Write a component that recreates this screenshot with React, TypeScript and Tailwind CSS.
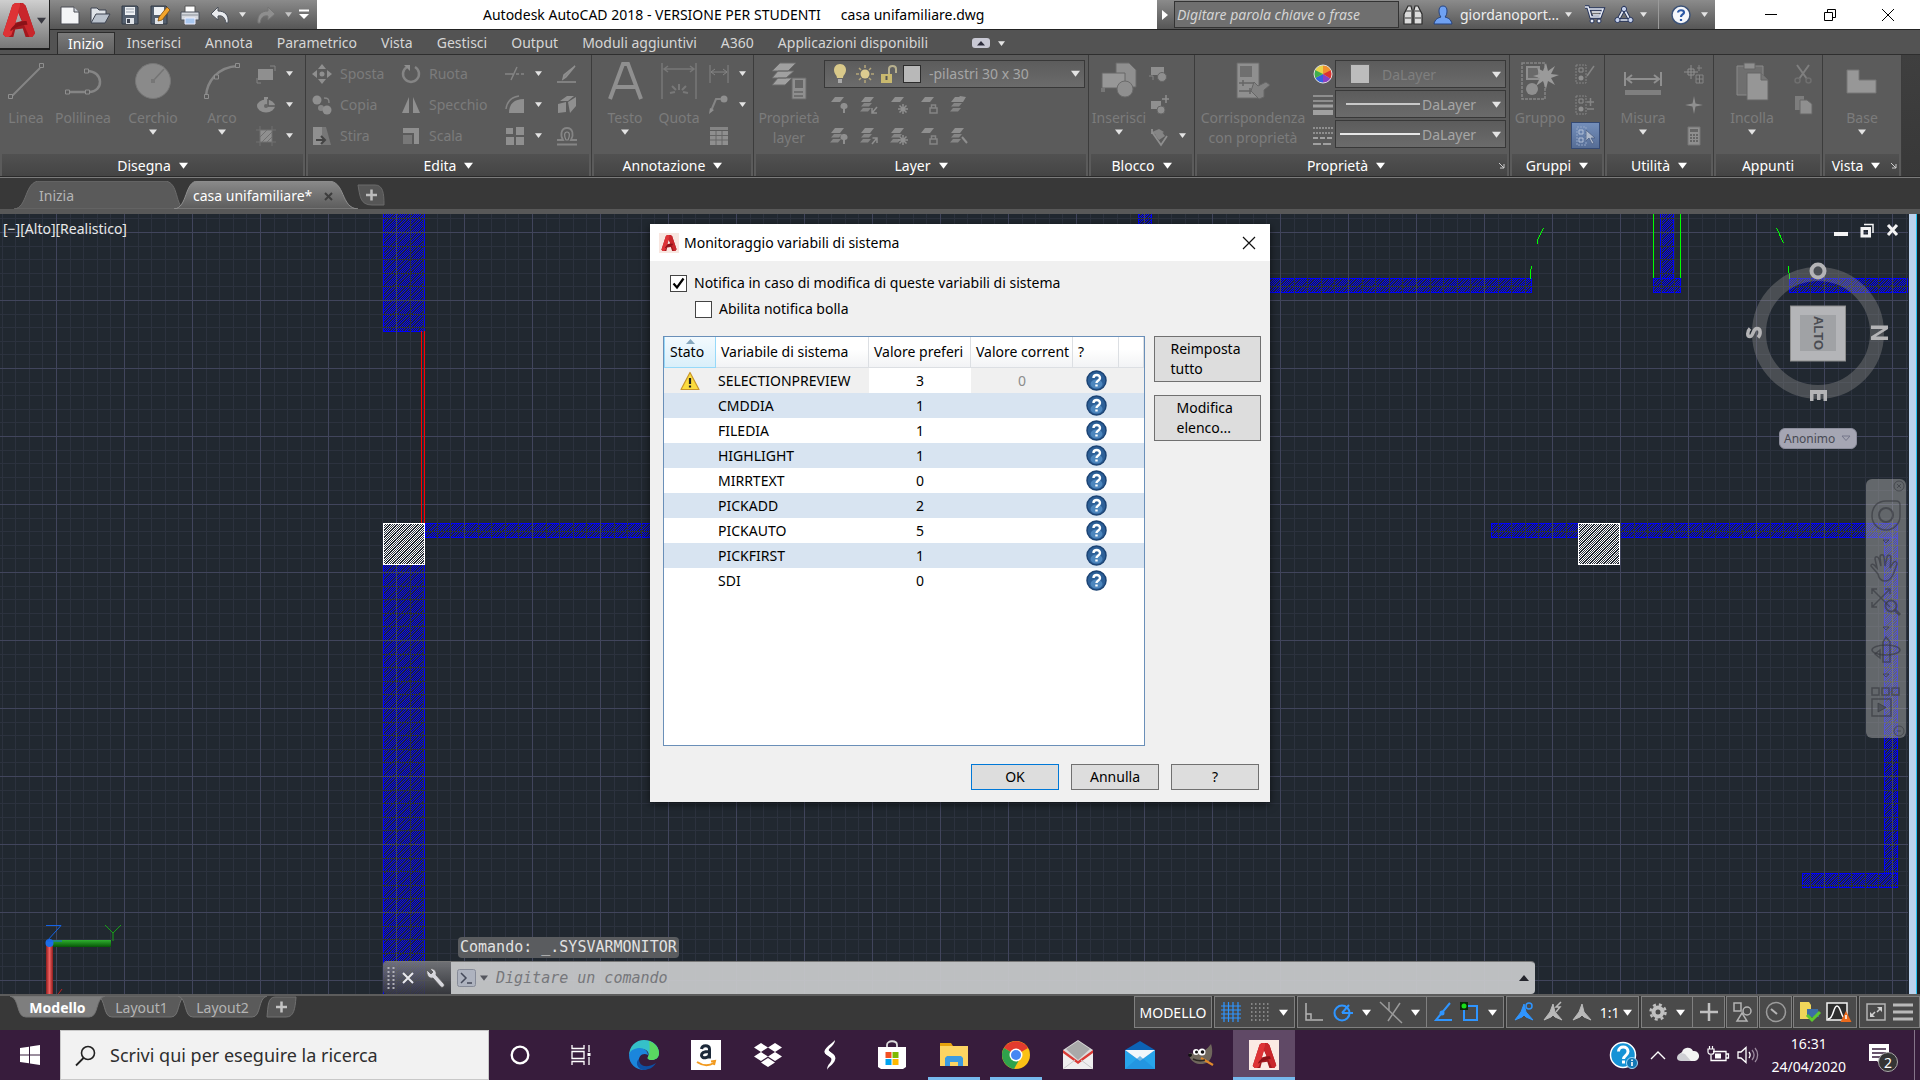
import React from "react";

type Kids = { children?: React.ReactNode };

function Svg({ s = 20, w, h, vb, className = "", children }: Kids & { s?: number; w?: number; h?: number; vb?: string; className?: string }) {
  const ww = w ?? s;
  const hh = h ?? s;
  return (
    <svg width={ww} height={hh} viewBox={vb ?? `0 0 ${ww} ${hh}`} className={`shrink-0 overflow-visible ${className}`} fill="none" aria-hidden="true">
      {children}
    </svg>
  );
}

function Caret({ s = 7, color = "#e4e4e4" }: { s?: number; color?: string }) {
  return (
    <Svg w={s} h={s} vb="0 0 8 8">
      <path d="M0 1.5h8L4 6.8z" fill={color} />
    </Svg>
  );
}

function IB({ label, className = "", children }: Kids & { label: string; className?: string }) {
  return (
    <button type="button" aria-label={label} className={`flex items-center justify-center ${className}`}>
      {children}
    </button>
  );
}

/* ---------- logos ---------- */

function AcadA({ s = 36 }: { s?: number }) {
  return (
    <Svg s={s} vb="0 0 36 36">
      <path fillRule="evenodd" d="M11 2l3-2h8l3 3 10 29-3 4h-7l-3-9-8 1-2 8H4l-3-3zM17 10l-3 11 7-2z" fill="#a3181e" />
      <path d="M11 2l3-2h5l2 5-3 4-8 25-3 2H4l-3-3z" fill="#de3336" />
      <path d="M20 0h2l3 3 10 29-3 4h-3L17 9z" fill="#c9262b" />
      <path d="M9 28c5-7 10-9 17-9l1 4c-6 0-12 2-18 7z" fill="#8b1218" />
    </Svg>
  );
}

/* ---------- title bar ---------- */

function QuickAccess() {
  return (
    <div className="flex h-full w-[267px] shrink-0 items-center bg-linear-to-b from-[#8b8b8b] to-[#565656] pl-2">
      <IB label="Nuovo" className="w-6">
        <Svg s={22}><path d="M2 3h13l5 5v12H2z" fill="#f4f5f7" stroke="#4a4d55" /><path d="M15 3v5h5" fill="#cfd3da" stroke="#4a4d55" /></Svg>
      </IB>
      <IB label="Apri" className="ml-1.5 w-6">
        <Svg s={22}><path d="M2 18V4h6l2 2h7v4" fill="#dfe3e8" stroke="#3d4350" /><path d="M2 19l5-9h14l-5 9z" fill="#b9c1cc" stroke="#3d4350" /></Svg>
      </IB>
      <IB label="Salva" className="ml-1.5 w-6">
        <Svg s={22}><path d="M3 2h15l1 1v17H3z" fill="#55606f" stroke="#333b47" /><path d="M6 3h10v8H6z" fill="#eef1f4" /><path d="M7 5h8M7 8h8" stroke="#9aa3af" /><path d="M7 14h8v6H7z" fill="#dfe3e8" /><path d="M8 15h3v4H8z" fill="#3d4350" /></Svg>
      </IB>
      <IB label="Salva con nome" className="ml-1.5 w-6">
        <Svg s={22}><path d="M2 2h15l1 1v17H2z" fill="#55606f" stroke="#333b47" /><path d="M5 3h10v8H5z" fill="#eef1f4" /><path d="M6 14h8v6H6z" fill="#dfe3e8" /><path d="M18 3l3 3-8 10-4 1 1-4z" fill="#f3a52c" stroke="#7a4b10" strokeWidth=".8" /></Svg>
      </IB>
      <IB label="Stampa" className="ml-1.5 w-6">
        <Svg s={22}><path d="M6 2h10v7H6z" fill="#fff" stroke="#555" /><path d="M2 8h18v8H2z" fill="#d6d9de" stroke="#4b505a" /><path d="M2 11h18" stroke="#8b9099" /><path d="M6 14h10v6H6z" fill="#a9c8ef" stroke="#eef" /></Svg>
      </IB>
      <IB label="Annulla" className="ml-1.5 w-6">
        <Svg s={22}><path d="M9 3L2 10l7 6v-4c5-1 7 2 8 7h2c1-8-3-12-10-12z" fill="#e9ebee" stroke="#4b505a" /></Svg>
      </IB>
      <IB label="Elenco annulla" className="ml-1 w-3"><Caret /></IB>
      <IB label="Ripeti" className="ml-1.5 w-6">
        <Svg s={22}><path d="M13 3l7 7-7 6v-4c-5-1-7 2-8 7H3c-1-8 3-12 10-12z" fill="#8e8e8e" stroke="#747474" /></Svg>
      </IB>
      <IB label="Elenco ripeti" className="ml-1 w-3"><Caret color="#c4c4c4" /></IB>
      <IB label="Personalizza" className="ml-1 w-3">
        <Svg w={10} h={12}><path d="M0 1.5h10" stroke="#fff" strokeWidth="2" /><path d="M0 5h10L5 10z" fill="#fff" /></Svg>
      </IB>
    </div>
  );
}

function InfoCenter() {
  return (
    <div className="flex h-full w-[558px] shrink-0 items-center bg-linear-to-b from-[#8b8b8b] to-[#565656]">
      <IB label="Comprimi ricerca" className="h-full w-4">
        <Svg w={6} h={10}><path d="M0 0l6 5-6 5z" fill="#fff" /></Svg>
      </IB>
      <input aria-label="Ricerca guida" placeholder="Digitare parola chiave o frase" className="ml-px h-[27px] w-[225px] border border-[#333] bg-[#6f6f6f] px-0.5 text-[14px] text-white italic placeholder:text-[#d4d4d4]" />
      <IB label="Cerca" className="ml-1 w-5">
        <Svg s={20}><path d="M5 1h3l1 4v14H1V9zM15 1h-3l-1 4v14h8V9z" fill="#dcdcdc" stroke="#2c2c2c" strokeWidth="1.200" /><path d="M2 13h6M12 13h6M3 6h5M12 6h5" stroke="#3a3a3a" /></Svg>
      </IB>
      <IB label="Account" className="ml-[10px] w-5">
        <Svg s={20}><path d="M10 1c3 0 4 2 4 5s-1 5-2 6c3 1 6 2 7 7H1c1-5 4-6 7-7-1-1-2-3-2-6s1-5 4-5z" fill="#6fa1f2" stroke="#26437e" /></Svg>
      </IB>
      <button type="button" className="ml-[7px] flex items-center gap-1.5 text-[14px] text-[#eee]">giordanoport...<Caret /></button>
      <IB label="App Store" className="ml-3 w-5">
        <Svg s={20}><path d="M1 2h3l3 10h9l3-8H5" stroke="#26345c" strokeWidth="3.4" /><path d="M1 2h3l3 10h9l3-8H5M8 7h9M9 10h7" stroke="#e8ecf5" strokeWidth="1.5" /><circle cx="8" cy="16" r="2" fill="#e8ecf5" stroke="#26345c" /><circle cx="15" cy="16" r="2" fill="#e8ecf5" stroke="#26345c" /></Svg>
      </IB>
      <IB label="Connetti" className="ml-2.5 w-5">
        <Svg s={20}><path d="M10 4l6 11H4z" stroke="#26345c" strokeWidth="3.6" /><path d="M10 4l6 11H4z" stroke="#e8ecf5" strokeWidth="1.6" /><circle cx="10" cy="4" r="2.6" fill="#c7d3ee" stroke="#26345c" /><circle cx="3.5" cy="15" r="2.6" fill="#c7d3ee" stroke="#26345c" /><circle cx="16.500" cy="15" r="2.600" fill="#c7d3ee" stroke="#26345c" /></Svg>
      </IB>
      <IB label="Elenco connetti" className="ml-1 w-3"><Caret /></IB>
      <div className="ml-2 h-full w-px bg-[#9a9a9a]" />
      <IB label="Guida" className="ml-3 w-5">
        <Svg s={20}><circle cx="10" cy="10" r="9" fill="#f4f6fa" stroke="#3c5277" strokeWidth="1.5" /><path d="M7 7.500C7 4.500 13 4.500 13 7.500c0 2-3 2-3 4.500M10 14v2" stroke="#2c58a5" strokeWidth="2.200" /></Svg>
      </IB>
      <IB label="Elenco guida" className="ml-2 w-3"><Caret /></IB>
    </div>
  );
}

const MENU = ["Inserisci", "Annota", "Parametrico", "Vista", "Gestisci", "Output", "Moduli aggiuntivi", "A360", "Applicazioni disponibili"];

function Header() {
  return (
    <header className="flex h-[54px] bg-[#535353]">
      <button type="button" aria-label="Menu applicazione" className="flex h-[50px] w-[50px] shrink-0 items-center gap-px border-r border-b-2 border-[#1e1e1e] bg-linear-to-b from-[#cfcfcf] to-[#777] pb-2 pl-0.5">
        <AcadA s={34} />
        <Caret s={9} color="#3a3a42" />
      </button>
      <div className="flex min-w-0 flex-1 flex-col">
        <div className="flex h-[30px] items-center border-b border-[#222] bg-white">
          <QuickAccess />
          <h1 className="flex-1 truncate pl-[166px] text-[14px] whitespace-pre text-black">{"Autodesk AutoCAD 2018 - VERSIONE PER STUDENTI"}<span className="ml-5">casa unifamiliare.dwg</span></h1>
          <InfoCenter />
          <div className="flex w-[205px] shrink-0 items-center justify-between pr-[25px] pl-[49px]">
            <IB label="Riduci a icona"><Svg s={14}><path d="M1 6.500h12" stroke="#000" /></Svg></IB>
            <IB label="Ripristina"><Svg s={14}><path d="M1.500 4.500h8v8h-8zM4.500 4V1.500h8v8H10" stroke="#000" /></Svg></IB>
            <IB label="Chiudi"><Svg s={14}><path d="M1 1l12 12M13 1L1 13" stroke="#000" /></Svg></IB>
          </div>
        </div>
        <nav className="flex flex-1 items-end pl-[7px] text-[14px] text-[#d6d6d6]">
          <button type="button" className="h-[22px] border border-b-0 border-[#2c2c2c] bg-linear-to-b from-[#7a7a7a] to-[#5f5f5f] px-2.5 leading-5 text-white">Inizio</button>
          {MENU.map((m) => (
            <button type="button" key={m} className="h-[22px] px-3 leading-5">{m}</button>
          ))}
          <button type="button" aria-label="Riduci barra multifunzione" className="ml-8 flex h-[22px] items-center gap-2">
            <Svg w={18} h={10}><rect width="18" height="10" rx="3" fill="#c9c9d4" /><path d="M5 7.500h8L9 3z" fill="#2c2c3a" /></Svg>
            <Caret />
          </button>
        </nav>
      </div>
    </header>
  );
}

/* ---------- ribbon ---------- */

const G = "#858585";
const GL = "#8f8f8f";

function Panel({ title, w, caret = true, launch, children }: Kids & { title: string; w: string; caret?: boolean; launch?: boolean }) {
  return (
    <section className={`flex shrink-0 flex-col border-r border-[#3c3c3c] ${w}`}>
      <div className="flex h-[100px] pt-[3px]">{children}</div>
      <div className="mx-0.5 flex h-[22px] items-center bg-linear-to-b from-[#515151] to-[#444] text-[14px] text-white">
        <button type="button" className="flex flex-1 items-center justify-center gap-2 pt-px leading-5">{title}{caret && <Caret s={9} color="#fff" />}</button>
        {launch && (
          <IB label={`Opzioni ${title}`} className="w-3"><Svg s={7}><path d="M1 1l5 5M6 2v4H2" stroke="#ccc" /></Svg></IB>
        )}
      </div>
    </section>
  );
}

function Big({ w, lines, caret, children }: Kids & { w: string; lines: string[]; caret?: boolean }) {
  return (
    <button type="button" className={`flex shrink-0 flex-col items-center text-[14px] leading-5 text-[#7c7c7c] ${w}`}>
      <span className="flex h-[50px] items-center pb-1">{children}</span>
      {lines.map((l) => <span key={l} className="whitespace-nowrap">{l}</span>)}
      {caret && <Caret s={8} />}
    </button>
  );
}

function Col({ className = "", children }: Kids & { className?: string }) {
  return <div className={`flex shrink-0 flex-col ${className}`}>{children}</div>;
}

function Sm({ label, caret, text, children }: Kids & { label: string; caret?: boolean; text?: boolean }) {
  return (
    <button type="button" aria-label={label} className="flex h-[31px] items-center text-[14px] text-[#7c7c7c]">
      {children}
      {text && <span className="ml-2 leading-5">{label}</span>}
      {caret && <span className="ml-2.5"><Caret /></span>}
    </button>
  );
}

function Stack({ kind }: { kind: number }) {
  const multi = [1, 4, 5, 6, 7, 9].includes(kind);
  return (
    <Svg s={20}>
      <path d="M6 2h9l-4 5H2z" fill={GL} />
      {multi && <path d="M5 8h8l-3 3.500H2zM4 13h8l-3 3.500H1z" fill={G} />}
      {(kind === 0 || kind === 5) && <path d="M15 8a3 3 0 011 6v4h-2v-4a3 3 0 011-6z" fill={GL} />}
      {kind === 1 && <path d="M18 12l-5 6M13 13v5h5" stroke={GL} strokeWidth="1.500" />}
      {kind === 6 && <path d="M13 18l5-6M13.500 12H18v5" stroke={GL} strokeWidth="1.500" />}
      {(kind === 2 || kind === 7) && <path d="M14 9v10M9 14h10M10.500 10.500l7 7M17.500 10.500l-7 7" stroke={GL} strokeWidth="1.500" />}
      {(kind === 3 || kind === 8) && <path d="M11 13h7v5h-7zM12.500 13v-3h4v3" stroke={G} strokeWidth="1.500" />}
      {kind === 4 && <path d="M6 7l5-6 6 1-3 5z" fill={GL} />}
      {kind === 9 && <path d="M13 11l5 6" stroke={GL} strokeWidth="2" />}
    </Svg>
  );
}

function Combo({ label, value, children, className = "" }: Kids & { label: string; value: string; className?: string }) {
  return (
    <div className={`relative flex h-7 items-center border border-[#383838] bg-linear-to-b from-[#5c5c5c] to-[#6b6b6b] ${className}`}>
      {children}
      <select aria-label={label} defaultValue={value} className="h-full min-w-0 flex-1 appearance-none bg-transparent pl-2 text-[14px] text-[#a6a6a6]">
        <option>{value}</option>
      </select>
      <span className="pointer-events-none absolute right-1"><Caret s={9} /></span>
    </div>
  );
}

const LAYER_TOOLS = ["Disattiva", "Isola", "Congela", "Blocca", "Rendi corrente", "Attiva tutti", "Annulla isola", "Scongela tutti", "Sblocca", "Corrispondenza layer"];

function Ribbon() {
  return (
    <div className="flex h-[123px] overflow-hidden border-t border-b border-t-[#2e2e2e] border-b-[#2a2a2a] bg-linear-to-b from-[#3f3f3f] to-[#383838]">
      <div className="flex shrink-0 bg-[#5b5b5b]">
        <Panel title="Disegna" w="w-[306px]">
          <Big w="w-[52px]" lines={["Linea"]}>
            <Svg s={38}><path d="M5 34L33 6" stroke={G} strokeWidth="2" /><path d="M1.500 32.500h4v4h-4zM32.500 1.500h4v4h-4z" stroke={GL} fill="#5b5b5b" /></Svg>
          </Big>
          <Big w="w-[62px]" lines={["Polilinea"]}>
            <Svg s={38}><path d="M4 30h21c15 0 15-21-2-21" stroke={G} strokeWidth="2.500" /><path d="M1.500 28h4v4h-4zM21.500 28h4v4h-4zM20.500 7h4v4h-4z" stroke={GL} fill="#5b5b5b" /></Svg>
          </Big>
          <Big w="w-[78px]" lines={["Cerchio"]} caret>
            <Svg s={38}><circle cx="19" cy="19" r="17.500" fill="#8a8a8a" stroke="#777" /><path d="M19 19L30 7" stroke="#747474" strokeWidth="1.500" /><path d="M17 17h4v4h-4z" fill="#777" /></Svg>
          </Big>
          <Big w="w-[60px]" lines={["Arco"]} caret>
            <Svg s={38}><path d="M3 34C4 20 14 5 35 4" stroke={G} strokeWidth="2.500" /><path d="M1.500 32.500h4v4h-4zM11.500 13h4v4h-4zM32.500 1.500h4v4h-4z" stroke={GL} fill="#5b5b5b" /></Svg>
          </Big>
          <Col className="pl-1">
            <Sm label="Rettangolo" caret><Svg s={20}><path d="M2 5h15v11H2z" fill={GL} /><path d="M14 2h5v5M1 14v5h4" stroke={G} /></Svg></Sm>
            <Sm label="Ellisse" caret><Svg s={20}><ellipse cx="10" cy="11" rx="9" ry="6.500" fill={GL} /><path d="M10 2v8" stroke={GL} strokeWidth="4" /><path d="M12 4v7h7" stroke="#5b5b5b" strokeWidth="1.500" /><circle cx="10" cy="11" r="2" fill="#666" /></Svg></Sm>
            <Sm label="Tratteggio" caret><Svg s={20}><path d="M4 4h12v12H4z" fill={GL} /><path d="M4 0v20M16 0v20M0 4h20M0 16h20M4 11l7-7M6 16L16 6M11 16l5-5" stroke="#707070" /></Svg></Sm>
          </Col>
        </Panel>

        <Panel title="Edita" w="w-[286px]">
          <Col className="w-[90px] pl-[6px]">
            <Sm label="Sposta" text><Svg s={20}><path d="M10 0l4 5h-8zM10 20l4-5h-8zM0 10l5-4v8zM20 10l-5-4v8z" fill={GL} /><circle cx="10" cy="10" r="2.500" fill={GL} /></Svg></Sm>
            <Sm label="Copia" text><Svg s={20}><circle cx="5" cy="5" r="4.500" fill={GL} /><circle cx="9" cy="13" r="3" fill={G} /><circle cx="15" cy="15" r="4.500" fill={GL} /><path d="M12 3c4 0 5 1 5 5" stroke={G} strokeWidth="1.500" /></Svg></Sm>
            <Sm label="Stira" text><Svg s={20}><path d="M1 1h9v18H1z" fill={GL} /><path d="M10 1h4l5 18h-9z" fill="#777" /><path d="M4 14h8M9 10l4 4-4 4" stroke="#444" strokeWidth="2" /></Svg></Sm>
          </Col>
          <Col className="w-[103px] pl-[5px]">
            <Sm label="Ruota" text><Svg s={20}><path d="M6 3a8 8 0 108 0" stroke={G} strokeWidth="2.500" /><path d="M3 1h6v6z" fill={GL} /></Svg></Sm>
            <Sm label="Specchio" text><Svg s={20}><path d="M8 2v16H1zM12 2v16h7z" fill={GL} /></Svg></Sm>
            <Sm label="Scala" text><Svg s={20}><path d="M2 2h16v16h-5V7H2z" fill={GL} /><path d="M2 9h9v9H2z" fill="#787878" /></Svg></Sm>
          </Col>
          <Col className="w-[51px] pl-[6px]">
            <Sm label="Taglia" caret><Svg s={20}><path d="M0 10h8M11 10h3M16 10h3M6 16L12 3" stroke={G} strokeWidth="1.500" /></Svg></Sm>
            <Sm label="Raccordo" caret><Svg s={20}><path d="M4 18C4 9 9 4 19 4v14z" fill={GL} /><path d="M1 14C2 6 7 2 14 1" stroke={G} strokeWidth="1.500" /></Svg></Sm>
            <Sm label="Serie" caret><Svg s={20}><path d="M1 2h7v6H1zM11 1h8v8h-8zM1 11h8v8H1zM11 11h8v8h-8z" fill={GL} /></Svg></Sm>
          </Col>
          <Col className="pl-[7px]">
            <Sm label="Cancella"><Svg s={20}><path d="M18 2L9 13l-3 2 1-4zM0 18h19" stroke={GL} strokeWidth="1.500" fill={G} /></Svg></Sm>
            <Sm label="Esplodi"><Svg s={20}><path d="M1 9l8-2v10l-8 1zM11 7l8-5v9l-6 7zM3 6l7-5h7l-6 5z" fill={GL} /></Svg></Sm>
            <Sm label="Offset"><Svg s={20}><path d="M0 14h6c-3-5-2-12 4-12s7 7 4 12h6M0 18.500h20" stroke={G} strokeWidth="1.800" /><path d="M10 6c-3 0-3 4-1 8h2c2-4 2-8-1-8z" stroke={GL} strokeWidth="1.200" /></Svg></Sm>
          </Col>
        </Panel>

        <Panel title="Annotazione" w="w-[162px]">
          <Big w="w-[66px]" lines={["Testo"]} caret>
            <Svg s={38}><path d="M4 37L17 2h5l13 35M9 25h21" stroke={GL} strokeWidth="4" /></Svg>
          </Big>
          <Big w="w-[42px]" lines={["Quota"]}>
            <Svg s={38}><path d="M2 1v36M36 1v36M4 7h30M8 4L4 7l4 3M30 4l4 3-4 3" stroke="#787878" strokeWidth="1.500" /><path d="M10 31l5-1M28 31l-5-1M19 22v6M12 24l4 4M26 24l-4 4" stroke="#787878" strokeWidth="2" /></Svg>
          </Big>
          <Col className="pl-[9px]">
            <Sm label="Lineare" caret><Svg s={20}><path d="M1 1v18M19 1v18M2 8h16M6 5L2 8l4 3M14 5l4 3-4 3" stroke={G} /></Svg></Sm>
            <Sm label="Direttrice" caret><Svg s={20}><circle cx="15" cy="4" r="3.500" fill={GL} /><path d="M12 4H7L2 16" stroke={G} strokeWidth="2" /><path d="M0 19l1-6 4 2z" fill={GL} /></Svg></Sm>
            <Sm label="Tabella"><Svg s={20}><path d="M1 1h18v3H1z" fill={G} /><path d="M1 5h18v14H1z" fill={GL} /><path d="M1 9.500h18M1 14h18M7 5v14M13 5v14" stroke="#666" /></Svg></Sm>
          </Col>
        </Panel>

        <Panel title="Layer" w="w-[335px]">
          <Big w="w-[70px]" lines={["Proprietà", "layer"]}>
            <Svg s={38}><path d="M10 1h16l-8 8H2zM8 9h16l-8 7H2zM8 16h14l-7 7H2z" fill="#a0a0a0" stroke="#6a6a6a" /><path d="M22 16h14v21H22z" fill={GL} stroke="#6a6a6a" /><path d="M25 18h8v8h-8z" fill="#666" /><path d="M24 30h9M24 34h9" stroke="#666" strokeWidth="1.500" /></Svg>
          </Big>
          <div className="flex flex-1 flex-col pr-[3px]">
            <div className="flex h-[31px] items-center">
              <Combo label="Layer corrente" value="-pilastri 30 x 30" className="w-full pl-2">
                <Svg w={14} h={22}><path d="M7 1c4 0 6 3 6 6 0 4-3 5-3 8H4c0-3-3-4-3-8 0-3 2-6 6-6z" fill="#d9c98a" /><path d="M5 16h4v4H5z" fill="#a9a9a9" /></Svg>
                <Svg s={20} className="ml-2"><circle cx="10" cy="10" r="4.500" fill="#dccb90" /><path d="M10 1v3M10 16v3M1 10h3M16 10h3M4 4l2 2M14 14l2 2M16 4l-2 2M4 16l2-2" stroke="#b5a779" strokeWidth="1.500" /></Svg>
                <Svg s={20} className="ml-1"><path d="M2 10h11v9H2z" fill="#c9b96f" /><path d="M10 10V5c0-4 7-4 7 0v4" stroke="#b7b08e" strokeWidth="2" /><path d="M7.500 12v4" stroke="#555" strokeWidth="2" /></Svg>
                <span className="ml-1 h-[18px] w-[18px] border border-[#2c2c2c] bg-[#b8b8b8]" />
              </Combo>
            </div>
            <div className="grid w-[150px] grid-cols-5">
              {LAYER_TOOLS.map((t, i) => (
                <IB key={t} label={t} className="h-[31px]"><Stack kind={i} /></IB>
              ))}
            </div>
          </div>
        </Panel>

        <Panel title="Blocco" w="w-[106px]">
          <Big w="w-[60px]" lines={["Inserisci"]} caret>
            <Svg s={38}><path d="M16 1h13l7 7v17H16z" fill={GL} stroke="#6b6b6b" /><path d="M2 11h23v15H2z" fill="#979797" stroke="#666" /><circle cx="25" cy="27" r="8" fill={GL} stroke="#6b6b6b" /><path d="M1 26h4v4H1z" fill="#777" /></Svg>
          </Big>
          <Col>
            <Sm label="Crea"><Svg s={20}><path d="M2 3h13v8H2z" fill={GL} /><circle cx="13" cy="13" r="4.500" fill={GL} stroke="#666" /><path d="M0 12h4v4" stroke={G} /></Svg></Sm>
            <Sm label="Modifica"><Svg s={20}><path d="M2 6h10v8H2z" fill={GL} /><circle cx="12" cy="15" r="4" fill={GL} stroke="#666" /><path d="M17 0v8M13 4h7" stroke={GL} strokeWidth="1.500" /></Svg></Sm>
            <Sm label="Modifica attributi" caret><Svg s={20}><path d="M3 6l7-3 5 3-7 4zM6 9l7-3 3 4-6 4z" fill={G} /><path d="M3 6l9 13 6-9M3 3v5" stroke={GL} strokeWidth="1.800" /></Svg></Sm>
          </Col>
        </Panel>

        <Panel title="Proprietà" w="w-[315px]" launch>
          <Big w="w-[116px]" lines={["Corrispondenza", "con proprietà"]}>
            <Svg s={38}><path d="M3 1h22v35H3z" fill={GL} stroke="#6b6b6b" /><path d="M6 4h12v11H6z" fill="#6f6f6f" /><path d="M5 21h16M5 29h12M9 18v6M16 26v6" stroke="#666" strokeWidth="1.500" /><path d="M20 20l4 4 8-4 4 3-6 5v7l-5 2-8-8z" fill="#828282" stroke="#666" /></Svg>
          </Big>
          <Col className="w-[24px] items-center">
            <Sm label="Colore">
              <Svg s={20}><circle cx="10" cy="10" r="9" fill="#e8d44a" /><path d="M10 10L10 1a9 9 0 018 5z" fill="#f0922e" /><path d="M10 10l8-4a9 9 0 010 9z" fill="#dd3131" /><path d="M10 10l8 5a9 9 0 01-8 4z" fill="#8a3fc4" /><path d="M10 10v9a9 9 0 01-8-5z" fill="#3462e0" /><path d="M10 10l-8 4a9 9 0 010-8z" fill="#3fae4d" /><circle cx="10" cy="10" r="9" stroke="#ddd" /></Svg>
            </Sm>
            <Sm label="Spessore linea"><Svg s={20}><path d="M0 1h20M0 6h20" stroke="#a0a0a0" strokeWidth="1.500" /><path d="M0 11h20" stroke="#a0a0a0" strokeWidth="3" /><path d="M0 17.500h20" stroke="#a0a0a0" strokeWidth="5" /></Svg></Sm>
            <Sm label="Tipo di linea"><Svg s={20}><path d="M0 2h20M0 7h20" stroke="#a0a0a0" strokeWidth="1.500" strokeDasharray="2 1" /><path d="M0 12h20" stroke="#a0a0a0" strokeWidth="2" strokeDasharray="5 2" /><path d="M0 18h20" stroke="#a0a0a0" strokeWidth="2" strokeDasharray="8 2" /></Svg></Sm>
          </Col>
          <div className="flex flex-1 flex-col gap-0.5 pt-0.5 pr-[3px]">
            <Combo label="Colore oggetto" value="DaLayer" className="pl-3.5 [&>select]:text-[#7f7f7f]"><span className="mr-1 h-5 w-5 border border-[#666] bg-[#bcbcbc]" /></Combo>
            <Combo label="Spessore di linea" value="DaLayer" className="pl-2.5 [&>select]:pl-0.5"><span className="h-0.5 w-[74px] bg-[#c8c8c8]" /></Combo>
            <Combo label="Tipo linea" value="DaLayer" className="pl-1 [&>select]:pl-0.5"><span className="h-0.5 w-[80px] bg-[#e6e6e6]" /></Combo>
          </div>
        </Panel>

        <Panel title="Gruppi" w="w-[95px]">
          <Big w="w-[60px]" lines={["Gruppo"]}>
            <Svg s={38}><path d="M1 1h23v36H1z" stroke={G} strokeDasharray="3 1" strokeWidth="1.500" /><path d="M6 5h12v12H6z" fill="#6a6a6a" stroke={GL} strokeWidth="2" /><circle cx="11" cy="27" r="6" fill={GL} /><path d="M25 1l2 8 7-5-4 8 8 1-8 3 4 7-7-4-2 8-3-8-7 5 4-8-7-2 7-2-3-6 6 3z" fill="#9a9a9a" /></Svg>
          </Big>
          <Col className="w-[30px] items-center">
            <Sm label="Separa"><Svg s={20}><path d="M1 1h10v18H1z" stroke={G} strokeDasharray="2 1" /><path d="M4 4h4v4H4z" stroke={GL} /><circle cx="6" cy="14" r="2.500" fill={GL} /><path d="M19 2l-7 10" stroke={G} strokeWidth="1.500" /></Svg></Sm>
            <Sm label="Modifica gruppo"><Svg s={20}><path d="M1 1h10v18H1z" stroke={G} strokeDasharray="2 1" /><path d="M4 4h4v4H4z" stroke={GL} /><circle cx="6" cy="14" r="2.500" fill={GL} /><path d="M12 7h7M15.500 3v8M12 14h7" stroke={G} strokeWidth="1.500" /></Svg></Sm>
            <IB label="Selezione gruppo" className="mt-0.5 h-[27px] w-[29px] border border-[#354a73] bg-linear-to-b from-[#748fbb] to-[#566d95]"><Svg s={20}><path d="M2 1h9v18H2z" stroke="#93a6c6" strokeDasharray="2 1" /><path d="M4 4h4v4H4zM4 12h4v4H4z" stroke="#b3c0d6" /><path d="M11 4v11l3-3 3 6 2-1-3-5h4z" fill="#aeb9cb" stroke="#4b5f84" strokeWidth=".8" /></Svg></IB>
          </Col>
        </Panel>

        <Panel title="Utilità" w="w-[109px]">
          <Big w="w-[76px]" lines={["Misura"]} caret>
            <Svg s={38}><path d="M1 10v14M37 10v14M3 17h32M8 13l-5 4 5 4M30 13l5 4-5 4" stroke={GL} strokeWidth="2" /><path d="M1 28h36v5H1z" fill="#7f7f7f" /></Svg>
          </Big>
          <Col className="pl-[3px]">
            <Sm label="Selezione rapida"><Svg s={20}><path d="M7 1v14M0 8h14" stroke={GL} /><path d="M4 5h6v6H4z" stroke={GL} /><path d="M12 11h7v8h-7zM12 15h7M15.500 11v8M15 1v6M18 4h-5" stroke={G} /></Svg></Sm>
            <Sm label="ID punto"><Svg s={20}><path d="M10 1l1.500 7.500L19 10l-7.500 1.500L10 19l-1.500-7.500L1 10l7.500-1.500z" fill={GL} /></Svg></Sm>
            <Sm label="Calcolatrice"><Svg s={20}><path d="M4 1h12v18H4z" fill={GL} stroke="#777" /><path d="M6 3h8v3H6z" fill="#666" /><path d="M6 9h8M6 12h8M6 15h8" stroke="#666" strokeWidth="2" strokeDasharray="2 1" /></Svg></Sm>
          </Col>
        </Panel>

        <Panel title="Appunti" w="w-[109px]" caret={false}>
          <Big w="w-[76px]" lines={["Incolla"]} caret>
            <Svg s={38}><path d="M4 4h26v29H4z" fill="#6f6f6f" stroke="#8a8a8a" /><path d="M11 1h11v6H11z" fill={GL} stroke="#666" /><path d="M14 11h14l7 7v20H14z" fill="#969696" stroke="#666" /><path d="M28 11v7h7" fill="#777" stroke="#666" /></Svg>
          </Big>
          <Col className="pl-[3px]">
            <Sm label="Taglia negli Appunti"><Svg s={20}><path d="M4 1l10 14M16 1L6 15" stroke="#7f7f7f" strokeWidth="2" /><circle cx="4.500" cy="16.500" r="2.500" stroke="#6f6f6f" strokeWidth="1.500" /><circle cx="15.500" cy="16.500" r="2.500" stroke="#6f6f6f" strokeWidth="1.500" /></Svg></Sm>
            <Sm label="Copia negli Appunti"><Svg s={20}><path d="M2 1h9v14H2z" fill="#7d7d7d" /><path d="M7 5h7l5 4v10H7z" fill={GL} stroke="#666" /></Svg></Sm>
          </Col>
        </Panel>

        <Panel title="Vista" w="w-[79px]" launch>
          <Big w="w-[78px]" lines={["Base"]} caret>
            <Svg s={38}><path d="M4 8h12v10h17v13H4z" fill="#979797" stroke="#777" /></Svg>
          </Big>
        </Panel>
      </div>
    </div>
  );
}

/* ---------- file tabs ---------- */

function FileTabs() {
  return (
    <div className="flex h-[37px] items-end border-t border-[#7b7b7b] border-b-[5px] border-b-[#585858] bg-[#383838] pl-[14px] text-[14px]">
      <div className="flex h-7 items-end">
        <button type="button" className="relative h-7 w-[172px] pl-[25px] text-left leading-[30px] text-[#b4b4b4]">
          <svg className="absolute inset-0 h-full w-full" viewBox="0 0 172 28" preserveAspectRatio="none" aria-hidden="true"><path d="M0 28C14 27 10 0 26 0H150C166 0 160 27 172 28z" fill="#5a5a5a" stroke="#6c6c6c" /></svg>
          <span className="relative">Inizia</span>
        </button>
        <button type="button" className="relative -ml-3 flex h-7 w-[184px] items-center gap-3 pt-0.5 pl-[19px] leading-[28px] text-white">
          <svg className="absolute inset-0 h-full w-full" viewBox="0 0 184 28" preserveAspectRatio="none" aria-hidden="true"><defs><linearGradient id="ft" x2="0" y2="1"><stop stopColor="#8a8a8a" /><stop offset="1" stopColor="#5c5c5c" /></linearGradient></defs><path d="M0 28C14 27 10 0 24 0H154C172 0 166 27 184 28z" fill="url(#ft)" stroke="#909090" /></svg>
          <span className="relative">casa unifamiliare*</span>
          <Svg s={9} className="relative"><path d="M1 1l7 7M8 1L1 8" stroke="#3d3d3d" strokeWidth="2" /></Svg>
        </button>
        <button type="button" aria-label="Nuova scheda" className="flex h-7 items-center">
          <Svg w={28} h={22}><path d="M0 1h17c8 0 9 8 9 20H14C2 21 2 12 0 1z" fill="#565656" stroke="#6a6a6a" /><path d="M8 11h11M13.500 5.500v11" stroke="#bdbdbd" strokeWidth="2.500" /></Svg>
        </button>
      </div>
    </div>
  );
}

/* ---------- drawing area ---------- */

/* Pixel-stepped 45° hatch: one square per cell on the chosen diagonals of a tile. */
function hatch(size: number, diagonals: number[]) {
  let d = "";
  for (let y = 0; y < size; y++)
    for (let x = 0; x < size; x++) if (diagonals.includes((x + y) % size)) d += `M${x} ${y}h1v1h-1z`;
  return d;
}
const HATCH_BLUE = hatch(14, [0, 2, 4, 7, 9, 12]);
const HATCH_WHITE = hatch(14, [0, 2, 5, 7, 9, 12]);

function Wall({ x, y, w, h, c = "#0000ff", p = "hb" }: { x: number; y: number; w: number; h: number; c?: string; p?: string }) {
  return <rect x={x + 0.5} y={y + 0.5} width={w - 1} height={h - 1} fill={`url(#${p})`} stroke={c} />;
}

function Drawing() {
  return (
    <svg className="absolute inset-0 h-full w-full" shapeRendering="crispEdges" fill="none" aria-hidden="true">
      <defs>
        <pattern id="hb" width="14" height="14" patternUnits="userSpaceOnUse"><path d={HATCH_BLUE} fill="#0000ff" /></pattern>
        <pattern id="hw" width="14" height="14" patternUnits="userSpaceOnUse"><path d={HATCH_WHITE} fill="#ffffff" /></pattern>
        <pattern id="grid" x="56" y="232" width="68" height="68" patternUnits="userSpaceOnUse">
          <path d="M14.500 0v68M27.500 0v68M41.500 0v68M54.500 0v68M0 14.500h68M0 27.500h68M0 41.500h68M0 54.500h68" stroke="#2c323e" />
          <path d="M.5 0v68M0 .5h68" stroke="#41455c" />
        </pattern>
        <linearGradient id="gbar" x2="0" y2="1"><stop stopColor="#2fb02f" /><stop offset="1" stopColor="#075507" /></linearGradient>
        <linearGradient id="rbar"><stop stopColor="#8e1c1c" /><stop offset=".5" stopColor="#f06060" /><stop offset="1" stopColor="#8e1c1c" /></linearGradient>
      </defs>
      <g transform="translate(0 -214)">
        <Wall x={383} y={200} w={42} h={132} />
        <Wall x={383} y={564} w={42} h={440} />
        <Wall x={425} y={523} w={400} h={15} />
        <Wall x={1138} y={200} w={14} h={40} />
        <Wall x={1200} y={278} w={332} h={15} />
        <Wall x={1660} y={200} w={14} h={79} />
        <Wall x={1653} y={278} w={28} h={15} />
        <Wall x={1789} y={278} w={119} h={15} />
        <Wall x={1491} y={523} w={88} h={15} />
        <Wall x={1620} y={523} w={278} h={15} />
        <Wall x={1884} y={537} w={14} h={337} />
        <Wall x={1802} y={873} w={96} h={15} />
        <rect y="200" width="1908" height="900" fill="url(#grid)" />
        <Wall x={383} y={523} w={42} h={42} c="#fff" p="hw" />
        <Wall x={1578} y={523} w={42} h={42} c="#fff" p="hw" />
        <path d="M421.500 331v192M424.500 331v192" stroke="#ff0000" />
        <path d="M1653.500 214v64M1680.500 214v64M1537.500 244v-4l6-12M1530.500 279v-6l1-7M1776.500 228l7 15M1788.500 266l1 13" stroke="#00ff00" />
        <g shapeRendering="auto">
          <rect x="50" y="940" width="61" height="7" fill="url(#gbar)" />
          <rect x="46" y="943" width="7" height="60" fill="url(#rbar)" />
          <circle cx="49.500" cy="943" r="4" fill="#1c6ee8" />
          <path d="M46 925.500h15L47 941h15" stroke="#1463e6" />
          <path d="M105 925l8 8 8-8M113 933v8" stroke="#16a016" />
          <path d="M62 989l-6 8" stroke="#c02020" />
        </g>
      </g>
    </svg>
  );
}

function ViewCube() {
  return (
    <div className="absolute top-[46px] right-[17px] flex w-[146px] flex-col items-center">
      <svg width="146" height="142" viewBox="0 0 146 142" fill="none" role="img" aria-label="ViewCube" className="overflow-visible">
        <circle cx="73" cy="73" r="59" stroke="#8f8f8f" strokeOpacity=".38" strokeWidth="14" />
        <rect x="45.500" y="46" width="55" height="55" fill="#b4b5b8" stroke="#8c8c8c" />
        <rect x="55" y="55" width="36" height="36" fill="#a0a2a5" />
        <circle cx="73" cy="11" r="6.500" stroke="#b4b4b6" strokeWidth="4" />
        <path d="M126 80v-3.500l12-7.500h-12v-3.500h17V69l-12 7.500h12V80z" fill="#b4b4b6" />
        <path d="M5 68.500c-3 3-3 8 0 8s3-8 7-8 4 6 1 9" stroke="#b4b4b6" strokeWidth="3.500" />
        <path d="M65 130h17v11h-3.500v-7h-3v6h-3.500v-6h-3.500v7H65z" fill="#b4b4b6" />
        <text transform="translate(69 73) rotate(90)" fill="#4a4c52" fontFamily="Liberation Sans" fontWeight="bold" fontSize="13" textAnchor="middle">ALTO</text>
      </svg>
      <button type="button" className="mt-[26px] flex h-[21px] w-[78px] items-center gap-1.5 rounded-md border border-[#8b8d9b] bg-[#a5a6b3] pl-1 text-[12px] text-[#484a54]">
        Anonimo
        <Svg w={10} h={7}><path d="M1 1h8L5 5.500z" stroke="#74768a" /></Svg>
      </button>
    </div>
  );
}

function NavBar() {
  return (
    <div className="absolute top-[265px] right-[2px] flex w-10 flex-col items-center rounded-md bg-[#a6a6a6]/50 py-px">
      <Svg w={40} h={257} className="stroke-[#33353c]/60">
        <circle cx="33" cy="6" r="5" /><path d="M31 4l4 4M35 4l-4 4" />
        <path d="M6 36C6 26 12 21 20 21h10c3 0 4 1 4 4v11a14 14 0 01-28 0z" strokeWidth="1.500" /><circle cx="20" cy="35" r="7" strokeWidth="2" /><path d="M17 60h6l-3 3z" />
        <path d="M12 94L5 86c0-3 3-2 5 1l1 1-2-9c0-3 3-3 4 0l2 7-1-9c0-3 4-3 4 0l1 9 2-9c1-3 4-2 4 1l-1 10 3-5c2-3 4-1 4 1-3 8-5 17-12 17-4 0-6-2-7-7z" strokeWidth="1.500" />
        <path d="M6 109l18 18M24 109L6 127M6 114v-5h5M6 122v5h5M19 109h5v5" strokeWidth="1.500" /><circle cx="25" cy="126" r="5.500" strokeWidth="2" /><path d="M29 130l5 5" strokeWidth="3" /><path d="M17 147h6l-3 3z" />
        <ellipse cx="20" cy="170" rx="14" ry="5" strokeWidth="1.500" /><path d="M17 182v-20l3-5 4 5v20zM14 170l-5 4 5 4z" strokeWidth="1.500" /><path d="M17 194h6l-3 3z" />
        <path d="M6 208h7v7H6zM16 208h7v7h-7zM26 208h7v7h-7zM6 219h19v17H6z" strokeWidth="1.500" /><path d="M12 223v9l8-4.500z" fill="#45474e" fillOpacity=".7" />
        <circle cx="33" cy="251" r="5" /><path d="M31 251h4" />
      </Svg>
    </div>
  );
}

const VARS: [string, string][] = [
  ["CMDDIA", "1"], ["FILEDIA", "1"], ["HIGHLIGHT", "1"], ["MIRRTEXT", "0"], ["PICKADD", "2"], ["PICKAUTO", "5"], ["PICKFIRST", "1"], ["SDI", "0"],
];

function HelpDot() {
  return (
    <button type="button" aria-label="Guida variabile" className="mx-auto flex">
      <Svg s={21}>
        <circle cx="10.500" cy="10.500" r="9.500" fill="#2d6098" stroke="#1c4475" strokeWidth="1.500" />
        <ellipse cx="10.500" cy="14" rx="6" ry="4.500" fill="#4d86bd" />
        <path d="M7.500 8c0-4 6.500-4 6.500 0 0 2.500-3.500 2.500-3.500 5M10.500 14.500v2" stroke="#fff" strokeWidth="2.400" />
      </Svg>
    </button>
  );
}

function SysVarDialog() {
  const head = "h-[31px] border-r border-b border-[#dcdfe3] bg-linear-to-b from-white from-40% to-[#f2f3f5] pl-[5px] text-left font-normal whitespace-nowrap";
  return (
    <div role="dialog" aria-label="Monitoraggio variabili di sistema" className="absolute top-[10px] left-1/2 ml-[6px] w-[620px] -translate-x-1/2 bg-[#f0f0f0] text-[14px] leading-5 text-black shadow-[0_2px_8px_rgba(0,0,0,0.6)]">
      <div className="flex h-[37px] items-center bg-white pr-[14px] pl-[9px]">
        <span className="flex h-5 w-5 items-center justify-center bg-[#f8e6e0]"><AcadA s={16} /></span>
        <h2 className="flex-1 pl-[5px]">Monitoraggio variabili di sistema</h2>
        <IB label="Chiudi finestra"><Svg s={14}><path d="M1 1l12 12M13 1L1 13" stroke="#111" strokeWidth="1.200" /></Svg></IB>
      </div>
      <div className="flex flex-col gap-1.5 pt-3 pl-5">
        <label className="flex items-center gap-[7px]">
          <span className="relative flex">
            <input type="checkbox" defaultChecked className="h-[17px] w-[17px] appearance-none border border-[#444] bg-white" />
            <Svg s={17} className="pointer-events-none absolute inset-0"><path d="M3.500 8.500l3.500 4 6.500-9" stroke="#000" strokeWidth="2.200" /></Svg>
          </span>
          Notifica in caso di modifica di queste variabili di sistema
        </label>
        <label className="flex items-center gap-[7px] pl-[25px]">
          <input type="checkbox" className="h-[17px] w-[17px] appearance-none border border-[#444] bg-white" />
          Abilita notifica bolla
        </label>
      </div>
      <div className="flex gap-[9px] pt-[17px] pr-[9px] pl-[13px]">
        <div className="h-[410px] w-[482px] border border-[#6a8fb8] bg-white">
          <table className="w-full table-fixed border-separate border-spacing-0">
            <colgroup>
              <col className="w-[52px]" /><col className="w-[153px]" /><col className="w-[102px]" /><col className="w-[102px]" /><col className="w-[46px]" /><col className="w-[25px]" />
            </colgroup>
            <thead>
              <tr>
                <th className="relative h-[31px] border border-t-0 border-[#96d9f9] bg-linear-to-b from-[#f3fafe] to-[#d9effa] pl-[5px] text-left font-normal">
                  Stato
                  <svg className="absolute top-0.5 left-[21px]" width="9" height="5" aria-hidden="true"><path d="M0 5h9L4.500 0z" fill="#86a7bd" /></svg>
                </th>
                <th className={head}>Variabile di sistema</th>
                <th className={head}>Valore preferi</th>
                <th className={head}>Valore corrent</th>
                <th className={head}>?</th>
                <th className={head} aria-label="vuota" />
              </tr>
            </thead>
            <tbody>
              <tr className="h-[25px] bg-[#f0f0f0]">
                <td><Svg s={20} className="mx-auto"><path d="M10 1.500L19 18.500H1z" fill="#fbdc3f" stroke="#c9952a" strokeWidth="1.200" strokeLinejoin="round" /><path d="M10 7v6M10 14.500v2" stroke="#222" strokeWidth="2.200" /></Svg></td>
                <td className="pl-[2px]">SELECTIONPREVIEW</td>
                <td className="bg-white text-center">3</td>
                <td className="text-center text-[#8c8c8c]">0</td>
                <td><HelpDot /></td>
                <td />
              </tr>
              {VARS.map(([n, v], i) => (
                <tr key={n} className={`h-[25px] ${i % 2 === 0 ? "bg-[#d8e4f1]" : "bg-white"}`}>
                  <td />
                  <td className="pl-[2px]">{n}</td>
                  <td className="text-center">{v}</td>
                  <td />
                  <td><HelpDot /></td>
                  <td />
                </tr>
              ))}
            </tbody>
          </table>
        </div>
        <div className="flex flex-1 flex-col gap-[13px]">
          <button type="button" className="flex h-[46px] items-center justify-center border border-[#707070] bg-[#dddddd] text-left"><span className="w-[74px]">Reimposta tutto</span></button>
          <button type="button" className="flex h-[46px] items-center justify-center border border-[#707070] bg-[#dddddd] text-left"><span className="w-[62px]">Modifica elenco...</span></button>
        </div>
      </div>
      <div className="flex justify-end gap-3 pt-[18px] pr-[11px] pb-3">
        <button type="button" className="h-[26px] w-[88px] border border-[#0078d7] bg-[#dddddd]">OK</button>
        <button type="button" className="h-[26px] w-[88px] border border-[#707070] bg-[#dddddd]">Annulla</button>
        <button type="button" className="h-[26px] w-[88px] border border-[#707070] bg-[#dddddd]">?</button>
      </div>
    </div>
  );
}

function CommandLine() {
  return (
    <div className="absolute bottom-0 left-[383px] w-[1152px] font-['DejaVu_Sans_Mono',monospace] text-[15px]">
      <div className="mb-[3px] ml-[75px] flex h-[21px] w-fit items-center rounded-sm bg-[#5a5c5f] px-0.5 text-[#e2e2e2]">Comando: _.SYSVARMONITOR</div>
      <div className="flex h-[33px] overflow-hidden rounded-sm border-t border-[#777]">
        <div className="flex w-[68px] shrink-0 items-center gap-1.5 bg-linear-to-b from-[#77787c]/90 to-[#38393e]/90 pl-1">
          <Svg w={8} h={22}><path d="M1.500 0v22M6.500 0v22" stroke="#b0b0b8" strokeWidth="2" strokeDasharray="2 2" /></Svg>
          <IB label="Chiudi riga di comando"><Svg s={14}><path d="M2 2l10 10M12 2L2 12" stroke="#e8e8ee" strokeWidth="2" /></Svg></IB>
          <IB label="Personalizza riga di comando" className="ml-1"><Svg s={20}><path d="M2 2l4 4 2-2-3-3c4-1 7 2 6 6l8 9c1 2-1 4-3 3L8 10C4 11 1 7 2 2z" fill="#d7d7dd" stroke="#555" strokeWidth=".8" /></Svg></IB>
        </div>
        <div className="relative flex min-w-0 flex-1 items-center bg-[#c6c7c9]/95 pl-1.5">
          <IB label="Comandi recenti" className="gap-1">
            <Svg w={19} h={18}><rect x=".5" y=".5" width="18" height="17" rx="2" fill="#aeb3bf" stroke="#868b98" /><path d="M4 4l5 5-5 5M10 14h5" stroke="#454a5a" strokeWidth="1.500" /></Svg>
            <Caret s={8} color="#55575e" />
          </IB>
          <input aria-label="Riga di comando" placeholder="Digitare un comando" className="ml-2 h-full min-w-0 flex-1 bg-transparent italic placeholder:text-[#76777b]" />
          <IB label="Cronologia comandi" className="mr-1.5"><Svg w={10} h={6}><path d="M0 6h10L5 0z" fill="#24252c" /></Svg></IB>
        </div>
      </div>
    </div>
  );
}

function Canvas() {
  return (
    <main className="flex min-h-[780px] flex-1 bg-[#212830]">
      <div className="relative min-w-0 flex-1 overflow-hidden">
        <Drawing />
        <div className="absolute top-[5px] left-[3px] text-[14px] leading-5 text-[#e8e8e8]">[−][Alto][Realistico]</div>
        <div className="absolute top-[9px] right-[8px] flex items-center gap-3">
          <IB label="Riduci vista"><Svg s={14}><path d="M0 9h14v4H0z" fill="#f4f4f4" /></Svg></IB>
          <IB label="Ripristina vista"><Svg s={14}><path d="M2 5.500h7.500V13H2z" stroke="#f4f4f4" strokeWidth="3" /><path d="M4 1.500h9V10" stroke="#f4f4f4" strokeWidth="1.500" /></Svg></IB>
          <IB label="Chiudi vista"><Svg s={14}><path d="M2 2l9 10M11 2L2 12" stroke="#f4f4f4" strokeWidth="3" /></Svg></IB>
        </div>
        <ViewCube />
        <NavBar />
        <CommandLine />
        <SysVarDialog />
      </div>
      <div className="w-[12px] shrink-0 border-r-[3px] border-l border-r-[#1d2024] border-l-[#212830] bg-[#bcd3ee]"><div className="ml-auto h-full w-px bg-[#26c6f2]" /></div>
    </main>
  );
}

/* ---------- bottom bars ---------- */

const BLUE = "#2f95ff";

function StatusGroup({ className = "", children }: Kids & { className?: string }) {
  return <div className={`flex h-[32px] items-center justify-around border border-[#808080] bg-[#4a4a4a] px-0.5 ${className}`}>{children}</div>;
}

function Person({ c, extra }: { c: string; extra?: number }) {
  return (
    <Svg s={22}>
      <path d="M11 3l2 8 7 8-7-3-2-2-2 2-7 3 6-8z" fill={c} stroke={c} />
      {extra === 1 && <circle cx="16" cy="5" r="3" stroke={c} strokeWidth="1.500" />}
      {extra === 2 && <path d="M19 1l-5 5h4l-4 5" stroke={c} strokeWidth="1.500" />}
    </Svg>
  );
}

function StatusBar() {
  return (
    <div className="flex h-9 items-start border-t-2 border-[#5c5c5c] bg-[#383838] text-[14px]">
      <div className="flex flex-1 items-start pl-[10px]">
        {["Modello", "Layout1", "Layout2"].map((t, i) => (
          <button type="button" key={t} className={`relative h-[22px] ${i === 0 ? "z-10 w-[95px] font-bold text-white" : "-ml-2 w-[89px] text-[#b4b4b4]"}`}>
            <svg className="absolute inset-0 h-full w-full" viewBox="0 0 96 22" preserveAspectRatio="none" aria-hidden="true">
              <path d="M0 0h96C86 2 90 21 80 21H16C6 21 10 2 0 0z" fill={i === 0 ? "#7e7e7e" : "#5a5a5a"} stroke="#747474" />
            </svg>
            <span className="relative text-[14px] leading-5">{t}</span>
          </button>
        ))}
        <button type="button" aria-label="Nuovo layout">
          <Svg w={30} h={22}><path d="M8 1h21c-1 12-2 20-10 20H0C1 10 1 1 8 1z" fill="#565656" stroke="#707070" /><path d="M9 11h11M14.500 5.500v11" stroke="#c4c4c4" strokeWidth="2.500" /></Svg>
        </button>
      </div>
      <div className="flex shrink-0 gap-0.5">
        <StatusGroup className="w-[78px]"><button type="button" className="text-[14px] text-white">MODELLO</button></StatusGroup>
        <StatusGroup className="w-[81px]">
          <IB label="Griglia"><Svg s={20}><path d="M3 0v20M7.500 0v20M12 0v20M17 0v20M0 4h20M0 8h20M0 12h20M0 16h20" stroke={BLUE} strokeWidth="1.200" /></Svg></IB>
          <IB label="Snap"><Svg s={20}><path d="M1 2h18M1 6h18M1 10h18M1 14h18M1 18h18" stroke="#9a9a9a" strokeWidth="1.500" strokeDasharray="1.500 2.500" /></Svg></IB>
          <Caret s={9} color="#fff" />
        </StatusGroup>
        <StatusGroup className="w-[130px]">
          <IB label="Orto"><Svg s={20}><path d="M2 1v17h17M2 12h5v5" stroke="#b4b4b4" strokeWidth="1.500" /></Svg></IB>
          <IB label="Polare"><Svg s={20}><circle cx="9" cy="11" r="7.500" stroke={BLUE} strokeWidth="2" /><path d="M9 11h11M9 11l7-8" stroke={BLUE} strokeWidth="2" /></Svg></IB>
          <Caret s={9} color="#fff" />
          <IB label="Disegno isometrico"><Svg s={22}><path d="M0 1l22 21M20 2L8 20M9 1v8" stroke="#9a9a9a" strokeWidth="1.500" /></Svg></IB>
          <Caret s={9} color="#fff" />
        </StatusGroup>
        <StatusGroup className="-ml-[3px] w-[78px]">
          <IB label="Puntamento oggetto"><Svg s={20}><path d="M17 1L3 18h16" stroke={BLUE} strokeWidth="2" /><circle cx="9" cy="11" r="2.500" fill={BLUE} /></Svg></IB>
          <IB label="Snap ad oggetto"><Svg s={20}><path d="M4 4h13v14H4z" stroke={BLUE} strokeWidth="2" /><path d="M0 0h8v8H0z" fill="#0a2a0a" /><circle cx="4" cy="4" r="2.500" fill="#19e019" /></Svg></IB>
          <Caret s={9} color="#fff" />
        </StatusGroup>
        <StatusGroup className="w-[133px]">
          <IB label="Visibilità annotazione"><Person c={BLUE} extra={1} /></IB>
          <IB label="Scala automatica"><Person c="#b9b9b9" extra={2} /></IB>
          <IB label="Scala annotazione"><Person c="#b9b9b9" /></IB>
          <button type="button" className="flex items-center gap-1 text-[14px] text-white">1:1<Caret s={9} color="#fff" /></button>
        </StatusGroup>
        <StatusGroup className="w-[52px]">
          <IB label="Area di lavoro"><Svg s={18}><circle cx="9" cy="9" r="4.500" stroke="#c0c0c0" strokeWidth="4" /><circle cx="9" cy="9" r="7.500" stroke="#c0c0c0" strokeWidth="2.500" strokeDasharray="3 3" /></Svg></IB>
          <Caret s={9} color="#fff" />
        </StatusGroup>
        <StatusGroup className="-ml-[3px] w-[33px]"><IB label="Monitor annotazioni"><Svg s={18}><path d="M9 0v18M0 9h18" stroke="#c0c0c0" strokeWidth="2.500" /></Svg></IB></StatusGroup>
        <StatusGroup className="-ml-px w-[32px]"><IB label="Unità"><Svg s={20}><path d="M2 1h7v8H2zM10 11l-5 8h10z" stroke="#b4b4b4" strokeWidth="1.500" /><circle cx="15" cy="9" r="4" stroke="#b4b4b4" strokeWidth="1.500" /></Svg></IB></StatusGroup>
        <StatusGroup className="-ml-px w-[33px]"><IB label="Prestazioni"><Svg s={22}><circle cx="11" cy="11" r="9.500" stroke="#9c9c9c" strokeWidth="1.500" /><path d="M6 8l6 5" stroke="#b4b4b4" strokeWidth="2" /></Svg></IB></StatusGroup>
        <StatusGroup className="-ml-px w-[64px]">
          <IB label="Verifica file"><Svg s={22}><path d="M1 1h9l2 3v14H1z" fill="#f0d65a" /><path d="M8 8h11l1 8H8z" fill="#3d6da5" /><path d="M8 14l5 5 8-8" stroke="#5cc72f" strokeWidth="3" /></Svg></IB>
          <IB label="Monitor variabili"><Svg w={26} h={22}><path d="M1 2h20v17H1z" fill="#2d2d2d" stroke="#f4f4f4" strokeWidth="1.500" /><path d="M2 18c6 0 5-13 9-13s4 13 9 13" stroke="#fff" strokeWidth="1.500" /><path d="M20 10l5.500 11h-11z" fill="#ec6a1c" /><path d="M20 14v4" stroke="#fff" strokeWidth="1.500" /></Svg></IB>
        </StatusGroup>
        <StatusGroup className="w-[61px]">
          <IB label="Schermo intero"><Svg s={20}><path d="M1 2h18v16H1z" stroke="#b4b4b4" strokeWidth="1.500" /><path d="M4 15v-5l5 5zM16 5v5l-5-5z" fill="#d0d0d0" /><path d="M5 14l4-4M15 6l-4 4" stroke="#d0d0d0" strokeWidth="1.500" /></Svg></IB>
          <IB label="Personalizzazione"><Svg s={20}><path d="M0 3h20M0 10h20M0 17h20" stroke="#b9b9b9" strokeWidth="3" /></Svg></IB>
        </StatusGroup>
      </div>
    </div>
  );
}

function TaskButton({ label, active, open, children }: Kids & { label: string; active?: boolean; open?: boolean }) {
  return (
    <button type="button" aria-label={label} className={`relative flex h-full w-[62px] items-center justify-center ${active ? "bg-[#604966]" : ""}`}>
      {children}
      {(active || open) && <span className={`absolute bottom-0 h-[3px] bg-[#76b9ed] ${active ? "inset-x-0" : "inset-x-[5px]"}`} />}
    </button>
  );
}

function Taskbar() {
  return (
    <footer className="flex h-[50px] items-center bg-[#371c3c] text-white">
      <IB label="Start" className="h-full w-[60px]">
        <Svg s={20}><path d="M0 3l9-1.200V9.500H0zM10 1.600L20 0v9.500H10zM0 10.500h9v7.800L0 17zM10 10.500h10V20l-10-1.600z" fill="#fff" /></Svg>
      </IB>
      <div className="flex h-full w-[429px] items-center gap-[14px] border border-[#c8c8c8] bg-[#f2f2f2] pl-[14px]">
        <Svg s={21}><circle cx="13" cy="8" r="6.500" stroke="#222" strokeWidth="1.600" /><path d="M8.500 13L1 20.500" stroke="#222" strokeWidth="1.800" /></Svg>
        <input aria-label="Cerca" placeholder="Scrivi qui per eseguire la ricerca" className="h-full min-w-0 flex-1 bg-transparent text-[18px] text-black placeholder:text-[#2e2e2e]" />
      </div>
      <TaskButton label="Cortana"><Svg s={20}><circle cx="10" cy="10" r="8.300" stroke="#fff" strokeWidth="2.300" /></Svg></TaskButton>
      <TaskButton label="Visualizzazione attività"><Svg s={20}><path d="M0 0v3.500h12V0M0 20v-3.500h12V20M0 6.500h12v7H0zM17 0v7M17 12v8" stroke="#fff" strokeWidth="1.300" /><path d="M15.500 8h3v3h-3z" fill="#fff" /></Svg></TaskButton>
      <TaskButton label="Edge">
        <Svg s={30}>
          <path d="M0 16C0 6 7 0 15 0c9 0 15 6 15 13 0 5-4 7-7 7-4 0-5-2-4-3 2-4-1-8-6-8C6 9 1 12 0 16z" fill="#35c1c9" />
          <path d="M20 1c6 2 10 7 10 12 0 5-4 7-7 7-4 0-5-2-4-3 2-3 2-9 1-16z" fill="#59d861" />
          <path d="M0 15c1-5 6-7 11-7 4 0 8 3 8 7-5-3-10 1-9 7 1 4 4 7 8 8C8 31 0 25 0 15z" fill="#1b86dc" />
          <path d="M10 19c0 7 7 10 17 4-3 5-8 7-13 7-6-1-8-8-4-11z" fill="#0e4fa3" />
        </Svg>
      </TaskButton>
      <TaskButton label="Amazon">
        <Svg s={30}>
          <path d="M0 0h30v30H0z" fill="#fff" />
          <path d="M10.500 9C11 4.500 18.500 4.500 18.500 9V18.500M18.500 11.500c-5 0-8 .6-8 3.800 0 4 8 3 8-1.500" stroke="#1d2a3a" strokeWidth="3" />
          <path d="M6 22c6 4 12 4 17 1M20 21.500l4-.5-1 4" stroke="#f29a1f" strokeWidth="2" />
        </Svg>
      </TaskButton>
      <TaskButton label="Dropbox"><Svg s={30}><path d="M8 3l7 4.500L8 12 1 7.500zM22 3l7 4.500L22 12l-7-4.500zM8 12l7 4.500L8 21l-7-4.500zM22 12l7 4.500L22 21l-7-4.500zM15 18l7 4.500-7 4.500-7-4.500z" fill="#fff" /></Svg></TaskButton>
      <TaskButton label="Saetta"><Svg s={30}><path d="M20 0c-1 2-8 6-10 10-1 2 0 4 2 5l5 3c1 1 1 2 0 4 3-3 4-5 1-8l-4-3c-1-1 0-2 1-3 3-3 5-5 5-8z" fill="#fff" /><path d="M10 10c-1 2 0 4 2 5l4 3c1 2 0 3-1 5-2 2-3 4-3 7 1-3 7-6 8-10 1-2 0-4-1-5l-5-4c-1-1-1-2 0-4z" fill="#fff" /></Svg></TaskButton>
      <TaskButton label="Store"><Svg s={30}><path d="M10 8V5c0-5 10-5 10 0v3" stroke="#ddd" strokeWidth="1.800" /><path d="M1 7h28v20l-3 2H4l-3-2z" fill="#fff" /><path d="M8.500 12h6v6h-6z" fill="#f25022" /><path d="M15.500 12h6v6h-6z" fill="#7fba00" /><path d="M8.500 19h6v6h-6z" fill="#00a4ef" /><path d="M15.500 19h6v6h-6z" fill="#ffb900" /></Svg></TaskButton>
      <TaskButton label="Esplora file" open><Svg s={30}><path d="M1 3h11l2 3v4H1z" fill="#e6a20c" /><path d="M1 6h28v20H1z" fill="#fcd462" /><path d="M6 26v-8l2-2h14l2 2v8h-5v-4h-8v4z" fill="#3c9be0" /></Svg></TaskButton>
      <TaskButton label="Chrome" open>
        <Svg s={28}>
          <circle cx="14" cy="14" r="14" fill="#fbc116" />
          <path d="M14 14L2 7C7-2 21-2 26 7z" fill="#e33b2e" />
          <path d="M14 14L2 7c-5 8 0 19 10 21l5-9z" fill="#2fa24c" />
          <circle cx="14" cy="14" r="6.500" fill="#fff" /><circle cx="14" cy="14" r="5" fill="#4587f3" />
        </Svg>
      </TaskButton>
      <TaskButton label="Gmail"><Svg s={30}><path d="M0 10L15 0l15 10v19H0z" fill="#dcdcdc" /><path d="M3 9l12-8 12 8-12 11z" fill="#a9a9a9" /><path d="M0 29V10l15 11 15-11v19z" fill="#efefef" /><path d="M0 10l15 11 15-11v3L15 24 0 13z" fill="#d93c37" /><path d="M0 29l12-9M30 29l-12-9" stroke="#c9c9c9" /></Svg></TaskButton>
      <TaskButton label="Posta"><Svg s={30}><path d="M0 10L15 1l15 9v19H0z" fill="#0c62b5" /><path d="M0 10l15 11 15-11v19H0z" fill="#28a4ea" /><path d="M0 10h30L15 21z" fill="#f3f7fb" /><path d="M0 29L15 16l15 13z" fill="#1f8edb" fillOpacity=".6" /></Svg></TaskButton>
      <TaskButton label="GIMP"><Svg s={28}><path d="M1 12c3 0 6 2 9 0 6-1 9-4 13-9 2 6 2 14-3 18-6 4-15 2-18-4z" fill="#6f675c" /><circle cx="8" cy="11" r="3" fill="#fff" /><circle cx="14" cy="11" r="3.500" fill="#fff" /><circle cx="8.500" cy="11" r="1.500" fill="#111" /><circle cx="14.500" cy="11" r="1.800" fill="#111" /><path d="M0 14c1-2 4-2 4 0s-3 3-4 0z" fill="#111" /><path d="M13 17l12 7" stroke="#e08a2c" strokeWidth="2.200" /><path d="M5 18c4 2 8 2 12 1" stroke="#2b2722" strokeWidth="1.500" /></Svg></TaskButton>
      <TaskButton label="AutoCAD" active><span className="flex h-[30px] w-[30px] items-center justify-center bg-[#fbe9e3]"><AcadA s={25} /></span></TaskButton>
      <div className="flex h-full flex-1 items-center justify-end">
        <IB label="Assistenza" className="w-8"><Svg s={28}><circle cx="13" cy="14" r="12.500" fill="#1593d6" stroke="#fff" strokeWidth="1.500" /><path d="M8.500 10.500c0-6 9.500-6 9.500 0 0 4-4.500 4-4.500 7.500M13.500 19.500v3" stroke="#fff" strokeWidth="3" /><circle cx="22" cy="22" r="5.500" fill="#1277b5" stroke="#9fd7f5" /><path d="M22 21v4M22 18.500v1.500" stroke="#fff" strokeWidth="1.600" /></Svg></IB>
        <IB label="Icone nascoste" className="ml-2 w-5"><Svg w={16} h={10}><path d="M1 9l7-7 7 7" stroke="#fff" strokeWidth="1.400" /></Svg></IB>
        <IB label="OneDrive" className="ml-2 w-6"><Svg w={22} h={16}><path d="M5 14a5 5 0 010-9 6 6 0 0111-1 5 5 0 012 10z" fill="#f3f3f3" /><path d="M0 11c0-4 4-6 8-4l6 7H4c-2 0-4-1-4-3z" fill="#cfcfd4" /></Svg></IB>
        <IB label="Batteria" className="ml-1.5 w-6"><Svg w={22} h={18}><path d="M6 5.500h13v9H6M4 9v5.500h3M19.500 8h2v4h-2" stroke="#fff" strokeWidth="1.300" /><path d="M8 7.500h6v5H8z" fill="#fff" /><path d="M1 3h6v3c0 3-6 3-6 0zM2.500 0v3M5.500 0v3" stroke="#fff" strokeWidth="1.200" /></Svg></IB>
        <IB label="Volume" className="ml-1.5 w-6"><Svg w={22} h={18}><path d="M1 6h3l5-4.500v15L4 12H1z" stroke="#fff" strokeWidth="1.300" /><path d="M12 6c1.500 2 1.500 4 0 6" stroke="#fff" strokeWidth="1.300" /><path d="M15 4c2.500 3 2.500 7 0 10M18 2c3.500 4 3.500 10 0 14" stroke="#9b8a9e" strokeWidth="1.300" /></Svg></IB>
        <div className="ml-3 text-center text-[14px] leading-[23px]">16:31<br />24/04/2020</div>
        <button type="button" aria-label="Notifiche" className="relative ml-[22px] flex w-[34px]">
          <Svg w={22} h={26}><path d="M1 2h20v17h-7v5l-5-5H1z" fill="#fff" /><path d="M4 7h14M4 11h14M4 15h9" stroke="#371c3c" strokeWidth="1.500" /></Svg>
          <span className="absolute top-[10px] left-[10px] flex h-5 w-5 items-center justify-center rounded-full border border-[#a9a9a9] bg-[#353535] text-[14px]">2</span>
        </button>
        <div className="ml-3 h-full w-[6px] border-l border-[#85748a]" />
      </div>
    </footer>
  );
}

export default function App() {
  return (
    <div className="flex min-h-screen flex-col overflow-hidden bg-[#212830] font-['Noto_Sans','Open_Sans',sans-serif]">
      <Header />
      <Ribbon />
      <FileTabs />
      <Canvas />
      <StatusBar />
      <Taskbar />
    </div>
  );
}
